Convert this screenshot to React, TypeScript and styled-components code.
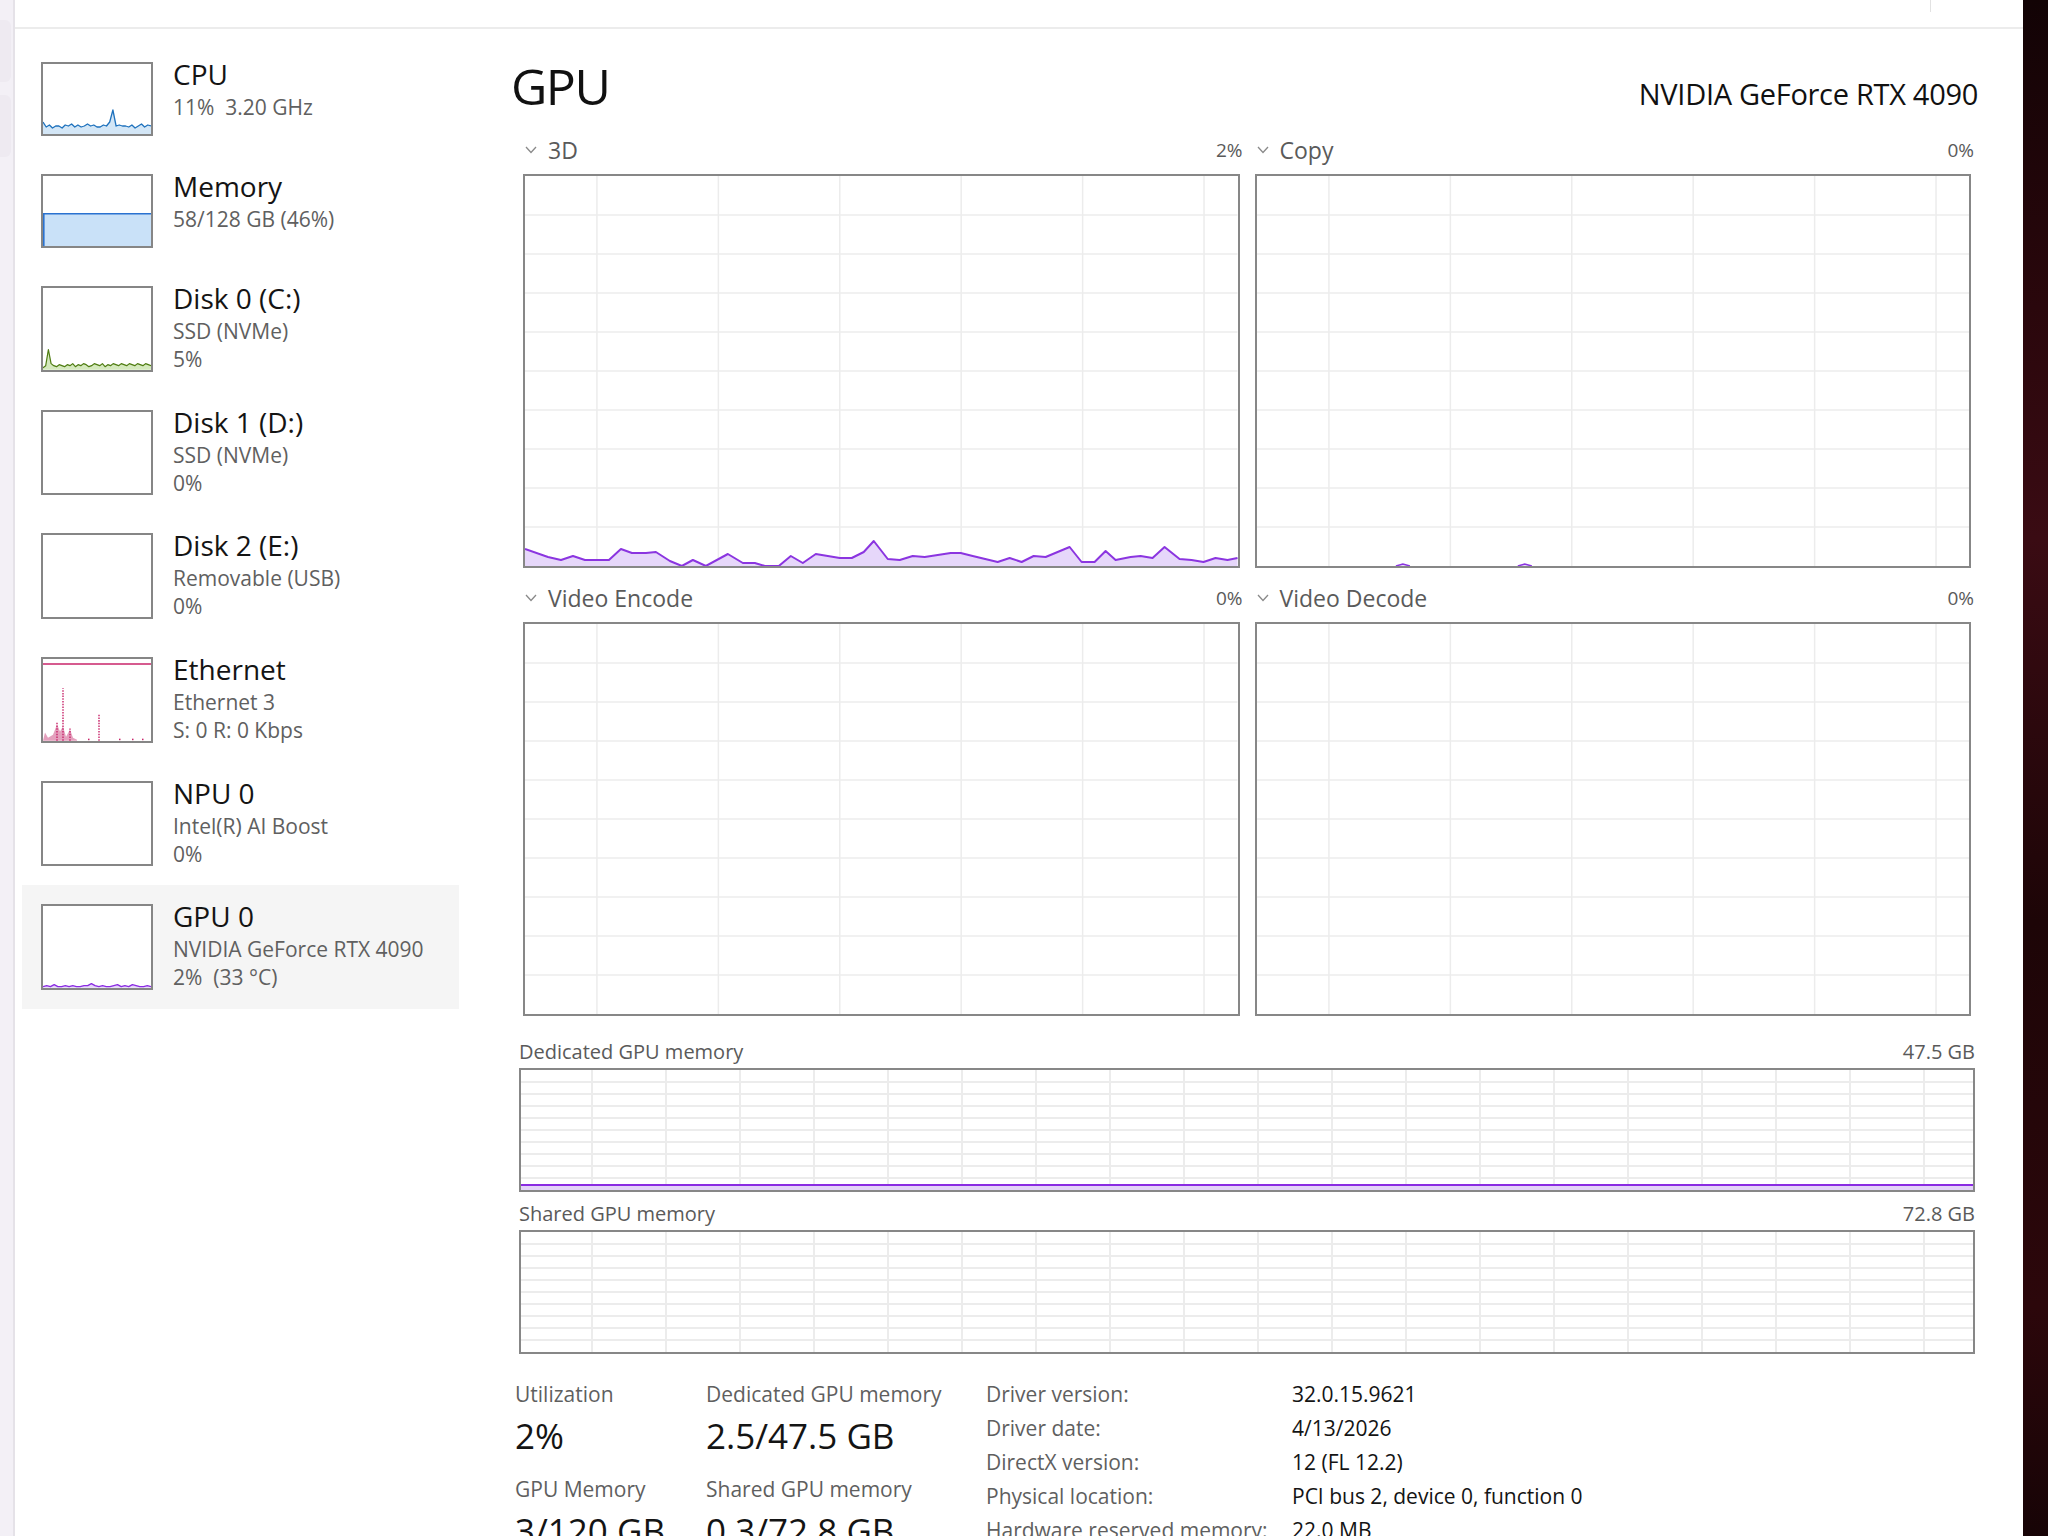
import React from "react";
import styled, { createGlobalStyle } from "styled-components";

const GlobalStyle = createGlobalStyle`
	html, body {
		margin: 0;
		padding: 0;
		background: #ffffff;
		overflow: hidden;
	}
	body {
		font-family: "Open Sans", "Noto Sans", "Liberation Sans", sans-serif;
		color: #1a1a1a;
	}
	* {
		box-sizing: border-box;
	}
`;

type Pt = [number, number];

// values are heights from the bottom; builds the stroke and the filled area
const buildPaths = (pts: Pt[], h: number) => {
	const line = pts
		.map(([x, v], i) => `${i ? "L" : "M"}${x.toFixed(1)} ${(h - v).toFixed(1)}`)
		.join(" ");
	const first = pts[0][0];
	const last = pts[pts.length - 1][0];
	return { line, area: `${line} L${last} ${h} L${first} ${h} Z` };
};

const spread = (values: number[], w: number): Pt[] => {
	const step = w / (values.length - 1);
	return values.map((v, i) => [i * step, v]);
};

interface GridProps {
	w: number;
	h: number;
	xOffset: number;
	xStep: number;
	rows: number;
	stroke?: number;
}

const GridLines = ({ w, h, xOffset, xStep, rows, stroke = 1.5 }: GridProps) => {
	const xs: number[] = [];
	for (let x = xOffset; x < w; x += xStep) xs.push(x);
	const ys: number[] = [];
	for (let i = 1; i < rows; i++) ys.push((h / rows) * i);
	return (
		<g stroke="#ececec" strokeWidth={stroke}>
			{xs.map((x) => (
				<line key={`x${x}`} x1={x} x2={x} y1={0} y2={h} />
			))}
			{ys.map((y) => (
				<line key={`y${y}`} x1={0} x2={w} y1={y} y2={y} />
			))}
		</g>
	);
};

interface AreaProps {
	pts: Pt[];
	h: number;
	color: string;
	fill: string;
	width?: number;
}

const AreaLine = ({ pts, h, color, fill, width = 1.6 }: AreaProps) => {
	const { line, area } = buildPaths(pts, h);
	return (
		<g>
			<path d={area} fill={fill} />
			<path d={line} fill="none" stroke={color} strokeWidth={width} strokeLinejoin="round" />
		</g>
	);
};

const cpuValues = [12, 7, 9, 6, 8, 8, 6, 9, 8, 10, 7, 9, 7, 8, 10, 8, 9, 7, 7, 9, 8, 12, 24, 8, 9, 8, 8, 7, 9, 6, 8, 10, 7, 9, 8];
const diskValues = [2, 4, 20, 6, 4, 3, 5, 4, 3, 5, 4, 6, 3, 5, 4, 6, 5, 3, 4, 6, 5, 4, 6, 3, 5, 4, 6, 5, 4, 6, 5, 4, 6, 5, 4, 6, 5, 4, 6, 5, 4];
const gpuThumbValues = [1, 2, 1, 3, 1, 1, 2, 1, 2, 1, 1, 2, 2, 4, 2, 1, 2, 1, 1, 2, 3, 1, 2, 1, 3, 2, 1, 1, 2, 1];

const threeDPoints: Pt[] = [
	[0, 17], [23, 9], [36, 6], [48, 10], [60, 6], [84, 6], [96, 17], [107, 13], [121, 13], [131, 14],
	[145, 5], [157, 0], [168, 6], [181, 0], [203, 12], [218, 3], [230, 3], [240, 0], [254, 0], [266, 10],
	[278, 3], [291, 12], [315, 8], [327, 8], [339, 14], [349, 25], [363, 7], [375, 6], [388, 10], [400, 9],
	[426, 13], [436, 13], [448, 10], [473, 4], [485, 8], [497, 4], [509, 10], [521, 9], [545, 19], [557, 4],
	[570, 4], [581, 15], [591, 6], [606, 9], [616, 10], [628, 8], [640, 19], [655, 7], [667, 6], [679, 4],
	[691, 8], [703, 6], [713, 8],
];

type ThumbKind = "cpu" | "memory" | "disk" | "empty" | "ethernet" | "gpu";

const ThumbGraph = ({ kind, h }: { kind: ThumbKind; h: number }) => {
	const w = 108;
	return (
		<svg width="100%" height="100%" viewBox={`0 0 ${w} ${h}`} preserveAspectRatio="none">
			{kind === "cpu" && (
				<AreaLine pts={spread(cpuValues, w)} h={h} color="#1f72bd" fill="#d3e6f6" width={1.3} />
			)}
			{kind === "memory" && (
				<g>
					<rect x={0} y={h * 0.54} width={w} height={h * 0.46} fill="#c9e1f8" />
					<line x1={0} x2={w} y1={h * 0.54} y2={h * 0.54} stroke="#2a72d0" strokeWidth={1.6} />
					<line x1={0.8} x2={0.8} y1={h * 0.54} y2={h} stroke="#2a72d0" strokeWidth={1.6} />
				</g>
			)}
			{kind === "disk" && (
				<AreaLine pts={spread(diskValues, w)} h={h} color="#4f7d12" fill="#d4e9bd" width={1.2} />
			)}
			{kind === "ethernet" && (
				<g>
					<line x1={0} x2={w} y1={5} y2={5} stroke="#c8246a" strokeWidth={1.6} />
					<path
						d={`M0 ${h} L2 ${h - 8} L5 ${h - 3} L10 ${h - 6} L14 ${h - 16} L17 ${h - 9} L20 ${h - 14} L23 ${h - 4} L27 ${h - 11} L30 ${h - 3} L34 ${h - 1} L34 ${h} Z`}
						fill="#e4a0bd"
					/>
					<g stroke="#c8246a" strokeWidth={1.4} strokeDasharray="1.5 1.2">
						<line x1={20} x2={20} y1={h} y2={h - 52} />
						<line x1={56} x2={56} y1={h} y2={h - 26} />
						<line x1={14} x2={14} y1={h} y2={h - 18} />
						<line x1={27} x2={27} y1={h} y2={h - 12} />
					</g>
					<g fill="#c8246a">
						<rect x={45} y={h - 2} width={1.5} height={1.5} />
						<rect x={76} y={h - 2} width={1.5} height={1.5} />
						<rect x={89} y={h - 2} width={1.5} height={1.5} />
						<rect x={99} y={h - 2} width={1.5} height={1.5} />
					</g>
				</g>
			)}
			{kind === "gpu" && (
				<AreaLine pts={spread(gpuThumbValues, w)} h={h} color="#8a2be2" fill="#e4d4f8" width={1.3} />
			)}
		</svg>
	);
};

interface Device {
	name: string;
	lines: string[];
	kind: ThumbKind;
	selected?: boolean;
}

const devices: Device[] = [
	{ name: "CPU", lines: ["11%  3.20 GHz"], kind: "cpu" },
	{ name: "Memory", lines: ["58/128 GB (46%)"], kind: "memory" },
	{ name: "Disk 0 (C:)", lines: ["SSD (NVMe)", "5%"], kind: "disk" },
	{ name: "Disk 1 (D:)", lines: ["SSD (NVMe)", "0%"], kind: "empty" },
	{ name: "Disk 2 (E:)", lines: ["Removable (USB)", "0%"], kind: "empty" },
	{ name: "Ethernet", lines: ["Ethernet 3", "S: 0 R: 0 Kbps"], kind: "ethernet" },
	{ name: "NPU 0", lines: ["Intel(R) AI Boost", "0%"], kind: "empty" },
	{ name: "GPU 0", lines: ["NVIDIA GeForce RTX 4090", "2%  (33 °C)"], kind: "gpu", selected: true },
];

const engines: { name: string; value: string; pts: Pt[] | null; bumps: number[] }[] = [
	{ name: "3D", value: "2%", pts: threeDPoints, bumps: [] },
	{ name: "Copy", value: "0%", pts: null, bumps: [146, 268] },
	{ name: "Video Encode", value: "0%", pts: null, bumps: [] },
	{ name: "Video Decode", value: "0%", pts: null, bumps: [] },
];

const info: [string, string][] = [
	["Driver version:", "32.0.15.9621"],
	["Driver date:", "4/13/2026"],
	["DirectX version:", "12 (FL 12.2)"],
	["Physical location:", "PCI bus 2, device 0, function 0"],
	["Hardware reserved memory:", "22.0 MB"],
];

const EngineChart = ({ pts, bumps }: { pts: Pt[] | null; bumps: number[] }) => {
	const w = 713;
	const h = 390;
	return (
		<svg width="100%" height="100%" viewBox={`0 0 ${w} ${h}`} preserveAspectRatio="none">
			<GridLines w={w} h={h} xOffset={72} xStep={121.5} rows={10} />
			{pts && <AreaLine pts={pts} h={h} color="#8b35e0" fill="#e6d7fa" width={2} />}
			{bumps.map((x) => (
				<path
					key={x}
					d={`M${x - 7} ${h} L${x} ${h - 2} L${x + 7} ${h}`}
					fill="#e6d7fa"
					stroke="#8b35e0"
					strokeWidth={1.5}
				/>
			))}
		</svg>
	);
};

const MemoryChart = ({ used }: { used: number }) => {
	const w = 1452;
	const h = 120;
	return (
		<svg width="100%" height="100%" viewBox={`0 0 ${w} ${h}`} preserveAspectRatio="none">
			<GridLines w={w} h={h} xOffset={71} xStep={74} rows={10} stroke={2} />
			{used > 0 && (
				<g>
					<rect x={0} y={h - used} width={w} height={used} fill="#e3d3f8" />
					<line x1={0} x2={w} y1={h - used} y2={h - used} stroke="#8a2be2" strokeWidth={2.2} />
				</g>
			)}
		</svg>
	);
};

const App = () => {
	return (
		<>
			<GlobalStyle />
			<Window>
				<NavRail>
					<NavPill />
					<NavPill />
				</NavRail>
				<MainPane>
					<TitleBar>
						<TitleDivider />
					</TitleBar>
					<Body>
						<Sidebar>
							{devices.map((d) => (
								<DeviceItem key={d.name} $selected={!!d.selected}>
									<Thumb $h={d.lines.length > 1 ? 85.7 : 74}>
										<ThumbGraph kind={d.kind} h={d.lines.length > 1 ? 81 : 70} />
									</Thumb>
									<DeviceText>
										<DeviceName>{d.name}</DeviceName>
										{d.lines.map((l) => (
											<DeviceDetail key={l}>{l}</DeviceDetail>
										))}
									</DeviceText>
								</DeviceItem>
							))}
						</Sidebar>
						<Content>
							<PageHeader>
								<PageTitle>GPU</PageTitle>
								<DeviceModel>NVIDIA GeForce RTX 4090</DeviceModel>
							</PageHeader>
							<EngineGrid>
								{engines.map((e) => (
									<EngineCell key={e.name}>
										<EngineHeader>
											<Chevron viewBox="0 0 12 8">
												<polyline points="1,1 6,6.5 11,1" />
											</Chevron>
											<EngineName>{e.name}</EngineName>
											<EngineValue>{e.value}</EngineValue>
										</EngineHeader>
										<GraphBox $h={394}>
											<EngineChart pts={e.pts} bumps={e.bumps} />
										</GraphBox>
									</EngineCell>
								))}
							</EngineGrid>
							<MemorySection>
								<MemHeader>
									<span>Dedicated GPU memory</span>
									<span>47.5 GB</span>
								</MemHeader>
								<GraphBox $h={124}>
									<MemoryChart used={5} />
								</GraphBox>
								<MemHeader $gap>
									<span>Shared GPU memory</span>
									<span>72.8 GB</span>
								</MemHeader>
								<GraphBox $h={124}>
									<MemoryChart used={0} />
								</GraphBox>
							</MemorySection>
							<Details>
								<StatColumn $w={191}>
									<Stat>
										<StatLabel>Utilization</StatLabel>
										<StatValue>2%</StatValue>
									</Stat>
									<Stat>
										<StatLabel>GPU Memory</StatLabel>
										<StatValue>3/120 GB</StatValue>
									</Stat>
								</StatColumn>
								<StatColumn $w={280}>
									<Stat>
										<StatLabel>Dedicated GPU memory</StatLabel>
										<StatValue>2.5/47.5 GB</StatValue>
									</Stat>
									<Stat>
										<StatLabel>Shared GPU memory</StatLabel>
										<StatValue>0.3/72.8 GB</StatValue>
									</Stat>
								</StatColumn>
								<InfoTable>
									{info.map(([k, v]) => (
										<React.Fragment key={k}>
											<InfoKey>{k}</InfoKey>
											<InfoVal>{v}</InfoVal>
										</React.Fragment>
									))}
								</InfoTable>
							</Details>
						</Content>
					</Body>
				</MainPane>
				<Desktop />
			</Window>
		</>
	);
};

const Window = styled.div`
	display: flex;
	width: 2048px;
	height: 1536px;
	overflow: hidden;
	background: #ffffff;
`;

const NavRail = styled.div`
	width: 15px;
	flex-shrink: 0;
	background: #f3f0f6;
	border-right: 2px solid #e5e2e8;
	display: flex;
	flex-direction: column;
	gap: 13px;
	padding-top: 20px;
`;

const NavPill = styled.div`
	width: 11px;
	height: 62px;
	border-radius: 0 6px 6px 0;
	background: #eeeaf1;
`;

const MainPane = styled.div`
	flex: 1;
	min-width: 0;
	display: flex;
	flex-direction: column;
	background: #ffffff;
`;

const TitleBar = styled.div`
	height: 29px;
	flex-shrink: 0;
	border-bottom: 2px solid #ececec;
	display: flex;
	justify-content: flex-end;
	align-items: flex-start;
	padding-right: 92px;
`;

const TitleDivider = styled.div`
	width: 1px;
	height: 12px;
	background: #e2e2e2;
`;

const Body = styled.div`
	flex: 1;
	min-height: 0;
	display: flex;
`;

const Sidebar = styled.nav`
	width: 444px;
	flex-shrink: 0;
	padding: 14px 0 0 7px;
	display: flex;
	flex-direction: column;
`;

const DeviceItem = styled.div<{ $selected: boolean }>`
	display: flex;
	align-items: flex-start;
	gap: 20px;
	padding: 19px 0 19px 19px;
	background: ${(p) => (p.$selected ? "#f5f5f5" : "transparent")};
`;

const Thumb = styled.div<{ $h: number }>`
	width: 112px;
	height: ${(p) => p.$h}px;
	flex-shrink: 0;
	border: 2px solid #868686;
	background: #ffffff;
	display: flex;
`;

const DeviceText = styled.div`
	display: flex;
	flex-direction: column;
	margin: -6px 0 -10px 0;
`;

const DeviceName = styled.div`
	font-size: 28px;
	line-height: 37px;
	color: #141414;
`;

const DeviceDetail = styled.div`
	font-size: 21px;
	line-height: 28px;
	color: #606060;
	white-space: pre;
`;

const Content = styled.main`
	flex: 1;
	min-width: 0;
	padding: 27px 48px 0 60px;
	display: flex;
	flex-direction: column;
`;

const PageHeader = styled.header`
	display: flex;
	justify-content: space-between;
	align-items: baseline;
	line-height: 60px;
`;

const PageTitle = styled.h1`
	margin: 0 0 0 -8px;
	font-size: 50px;
	font-weight: 400;
	letter-spacing: -1.5px;
	color: #111111;
`;

const DeviceModel = styled.div`
	font-size: 29px;
	letter-spacing: -0.3px;
	color: #111111;
	margin-right: -3px;
`;

const EngineGrid = styled.section`
	display: grid;
	grid-template-columns: 1fr 1fr;
	column-gap: 15px;
	row-gap: 17px;
	margin: 13px 4px 0 4px;
`;

const EngineCell = styled.div`
	display: flex;
	flex-direction: column;
`;

const EngineHeader = styled.div`
	display: flex;
	align-items: center;
	height: 26px;
	margin-bottom: 11px;
	padding-left: 2px;
`;

const Chevron = styled.svg`
	width: 12px;
	height: 8px;
	fill: none;
	stroke: #8a8a8a;
	stroke-width: 1.3;
	margin-right: 11px;
`;

const EngineName = styled.span`
	flex: 1;
	font-size: 23px;
	color: #5a5a5a;
`;

const EngineValue = styled.span`
	font-size: 19px;
	color: #5a5a5a;
	margin-right: -3px;
`;

const GraphBox = styled.div<{ $h: number }>`
	height: ${(p) => p.$h}px;
	border: 2px solid #878787;
	background: #ffffff;
	display: flex;
`;

const MemorySection = styled.section`
	display: flex;
	flex-direction: column;
	margin-top: 25px;
`;

const MemHeader = styled.div<{ $gap?: boolean }>`
	display: flex;
	justify-content: space-between;
	font-size: 20px;
	line-height: 22px;
	color: #5a5a5a;
	margin-top: ${(p) => (p.$gap ? "11px" : "0")};
	margin-bottom: 5px;
`;

const Details = styled.section`
	display: flex;
	align-items: flex-start;
	margin: 26px 0 0 -4px;
`;

const StatColumn = styled.div<{ $w: number }>`
	width: ${(p) => p.$w}px;
	flex-shrink: 0;
	display: flex;
	flex-direction: column;
`;

const Stat = styled.div`
	display: flex;
	flex-direction: column;
	margin-bottom: 11px;
`;

const StatLabel = styled.div`
	font-size: 21px;
	line-height: 28px;
	color: #5f5f5f;
	white-space: nowrap;
`;

const StatValue = styled.div`
	font-size: 35px;
	line-height: 56px;
	color: #141414;
	white-space: nowrap;
`;

const InfoTable = styled.div`
	display: grid;
	grid-template-columns: 306px auto;
	font-size: 21px;
	line-height: 34px;
	margin-top: -3px;
`;

const InfoKey = styled.div`
	color: #5f5f5f;
	white-space: nowrap;
`;

const InfoVal = styled.div`
	color: #141414;
	white-space: nowrap;
`;

const Desktop = styled.div`
	width: 25px;
	flex-shrink: 0;
	background: linear-gradient(
		180deg,
		#120305 0%,
		#2a070c 20%,
		#3a0b13 35%,
		#1d0507 60%,
		#2c070b 85%,
		#170406 100%
	);
`;

export default App;
